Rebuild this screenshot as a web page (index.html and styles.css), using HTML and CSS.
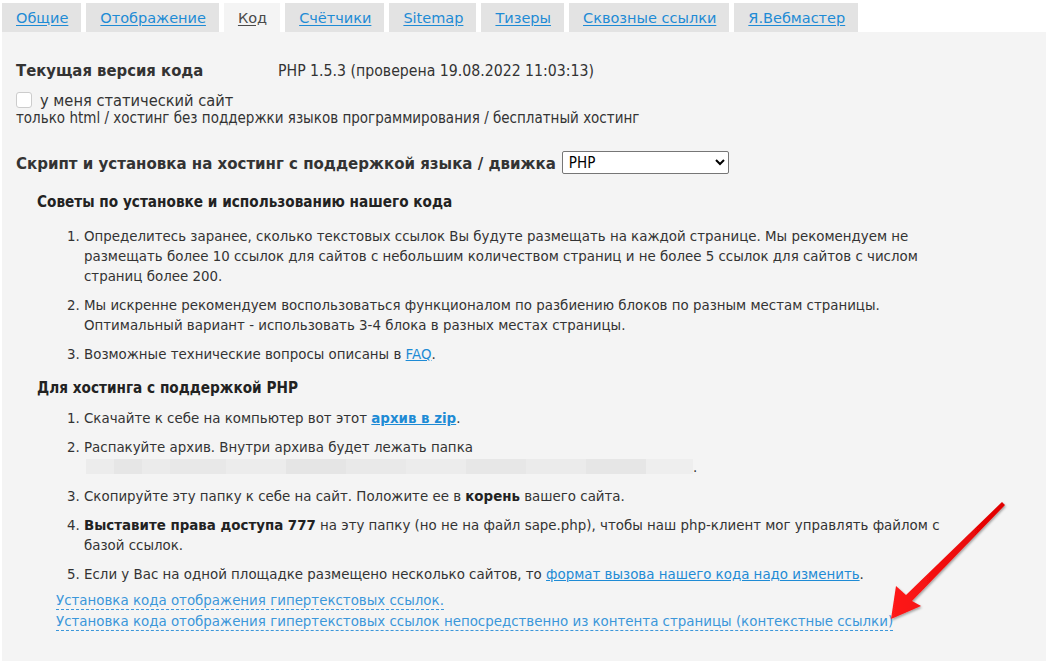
FILE: index.html
```html
<!DOCTYPE html>
<html lang="ru">
<head>
<meta charset="utf-8">
<title>Код</title>
<link rel="stylesheet" href="styles.css">
</head>
<body>
<div class="page">
  <nav class="tabs">
    <a class="tab" href="#">Общие</a>
    <a class="tab" href="#">Отображение</a>
    <span class="tab tab-active">Код</span>
    <a class="tab" href="#">Счётчики</a>
    <a class="tab" href="#">Sitemap</a>
    <a class="tab" href="#">Тизеры</a>
    <a class="tab" href="#">Сквозные ссылки</a>
    <a class="tab" href="#">Я.Вебмастер</a>
  </nav>

  <section class="panel">
    <div class="version-row">
      <span class="label">Текущая версия кода</span>
      <span class="version">PHP 1.5.3 (проверена 19.08.2022 11:03:13)</span>
    </div>

    <label class="static-row">
      <input type="checkbox" class="check">
      <span>у меня статический сайт</span>
    </label>
    <div class="static-note">только html / хостинг без поддержки языков программирования / бесплатный хостинг</div>

    <div class="engine-row">
      <span class="label">Скрипт и установка на хостинг с поддержкой языка / движка</span>
      <select class="engine">
        <option>PHP</option>
      </select>
    </div>

    <div class="guide">
      <h3 class="guide-title first">Советы по установке и использованию нашего кода</h3>
      <ol class="steps">
        <li>Определитесь заранее, сколько текстовых ссылок Вы будуте размещать на каждой странице. Мы рекомендуем не размещать более 10 ссылок для сайтов с небольшим количеством страниц и не более 5 ссылок для сайтов с числом страниц более 200.</li>
        <li>Мы искренне рекомендуем воспользоваться функционалом по разбиению блоков по разным местам страницы. Оптимальный вариант - использовать 3-4 блока в разных местах страницы.</li>
        <li>Возможные технические вопросы описаны в <a href="#">FAQ</a>.</li>
      </ol>

      <h3 class="guide-title">Для хостинга с поддержкой PHP</h3>
      <ol class="steps">
        <li>Скачайте к себе на компьютер вот этот <a class="strong-link" href="#">архив в zip</a>.</li>
        <li>Распакуйте архив. Внутри архива будет лежать папка<br><span class="hidden-name"></span>.</li>
        <li>Скопируйте эту папку к себе на сайт. Положите ее в <b>корень</b> вашего сайта.</li>
        <li><b>Выставите права доступа 777</b> на эту папку (но не на файл sape.php), чтобы наш php-клиент мог управлять файлом с базой ссылок.</li>
        <li>Если у Вас на одной площадке размещено несколько сайтов, то <a href="#">формат вызова нашего кода надо изменить</a>.</li>
      </ol>
    </div>

    <div class="more-links">
      <a class="dash-link" href="#">Установка кода отображения гипертекстовых ссылок.</a>
      <a class="dash-link" href="#">Установка кода отображения гипертекстовых ссылок непосредственно из контента страницы (контекстные ссылки)</a>
    </div>

    <svg class="pointer" width="140" height="140" viewBox="880 490 140 140" aria-hidden="true">
      <defs>
        <linearGradient id="arrowFill" x1="0" y1="0" x2="1" y2="0">
          <stop offset="0" stop-color="#ff1a1a"/>
          <stop offset="1" stop-color="#e00000"/>
        </linearGradient>
        <filter id="arrowShade" x="-20%" y="-20%" width="140%" height="140%">
          <feDropShadow dx="1" dy="1.5" stdDeviation="1.2" flood-color="#000" flood-opacity="0.35"/>
        </filter>
      </defs>
      <polygon points="891,619 896,586 906,595 1002,502 1005,505 912,601 921,606" fill="url(#arrowFill)" filter="url(#arrowShade)"/>
    </svg>
  </section>
</div>
</body>
</html>
```

FILE: styles.css
```css
html, body {
  margin: 0;
  padding: 0;
  background: #ffffff;
}

body {
  font-family: "DejaVu Sans", Verdana, sans-serif;
  font-size: 13.4px;
  color: #333333;
}

.page {
  padding: 3px 4px 4px 2px;
}

/* tab strip */
.tabs {
  display: flex;
  gap: 5px;
  height: 29px;
}

.tab {
  display: flex;
  align-items: center;
  padding: 0 13px 0 14px;
  background: #e3e3e3;
  color: #1e8bd5;
  font-size: 14.5px;
  text-decoration: underline;
  text-underline-offset: 2px;
}

.tab-active {
  background: #f4f4f4;
  color: #4a4a4a;
}

/* main panel */
.panel {
  position: relative;
  background: #f4f4f4;
  padding: 29px 14px 27px 14px;
}

.label {
  font-family: "DejaVu Sans Condensed", "DejaVu Sans", sans-serif;
  font-weight: bold;
  font-size: 16.5px;
  color: #333333;
}

.version-row {
  display: flex;
  align-items: baseline;
  height: 18px;
}

.version-row .label {
  width: 262px;
}

.version {
  font-family: "DejaVu Sans Condensed", "DejaVu Sans", sans-serif;
  font-size: 15.7px;
  color: #333333;
}

.static-row {
  display: flex;
  align-items: center;
  gap: 8px;
  margin-top: 12px;
  height: 18px;
  font-family: "DejaVu Sans Condensed", "DejaVu Sans", sans-serif;
  font-size: 16.3px;
}

.check {
  appearance: none;
  margin: 0;
  width: 16px;
  height: 16px;
  background: #ffffff;
  border: 1px solid #cccccc;
  border-radius: 3px;
}

.static-note {
  font-family: "DejaVu Sans Condensed", "DejaVu Sans", sans-serif;
  font-size: 15px;
  line-height: 18px;
}

.engine-row {
  display: flex;
  align-items: center;
  gap: 6px;
  margin-top: 24px;
}

.engine-row .label {
  font-size: 16.7px;
}

.engine {
  width: 167px;
  height: 23px;
  padding-left: 2px;
  font-family: "DejaVu Sans Condensed", "DejaVu Sans", sans-serif;
  font-size: 15px;
  color: #000000;
  background: #ffffff;
  border: 1px solid #767676;
  border-radius: 2px;
}

/* installation guide */
.guide {
  padding-left: 21px;
  padding-right: 70px;
}

.guide-title {
  margin: 14px 0 12px;
  font-family: "DejaVu Sans Condensed", "DejaVu Sans", sans-serif;
  font-size: 15.2px;
  font-weight: bold;
  color: #222222;
}

.guide-title.first {
  margin: 19px 0 16px;
}

.steps {
  margin: 0;
  padding-left: 47px;
  line-height: 20px;
}

.steps li {
  margin-bottom: 9px;
}

.steps li:last-child {
  margin-bottom: 0;
}

.steps a {
  color: #1e8bd5;
  text-decoration: underline;
}

.steps b {
  color: #222222;
}

.strong-link {
  font-weight: bold;
}

.hidden-name {
  display: inline-block;
  width: 607px;
  height: 15px;
  margin-left: 2px;
  vertical-align: -2px;
  background:
    linear-gradient(90deg,
      #ececec 0 28px, #e6e6e6 28px 56px, #ebebeb 56px 84px, #e8e8e8 84px 140px,
      #ececec 140px 200px, #e5e5e5 200px 260px, #e9e9e9 260px 320px, #ececec 320px 380px,
      #e7e7e7 380px 440px, #ebebeb 440px 500px, #e6e6e6 500px 560px, #eeeeee 560px 607px);
}

/* related pages */
.more-links {
  display: flex;
  flex-direction: column;
  align-items: flex-start;
  margin-top: 7px;
  padding-left: 40px;
}

.dash-link {
  color: #3b97da;
  text-decoration: none;
  border-bottom: 1px dashed #3b97da;
  line-height: 17px;
  margin-bottom: 3px;
}

.pointer {
  position: absolute;
  left: 878px;
  top: 458px;
  overflow: visible;
}
```
